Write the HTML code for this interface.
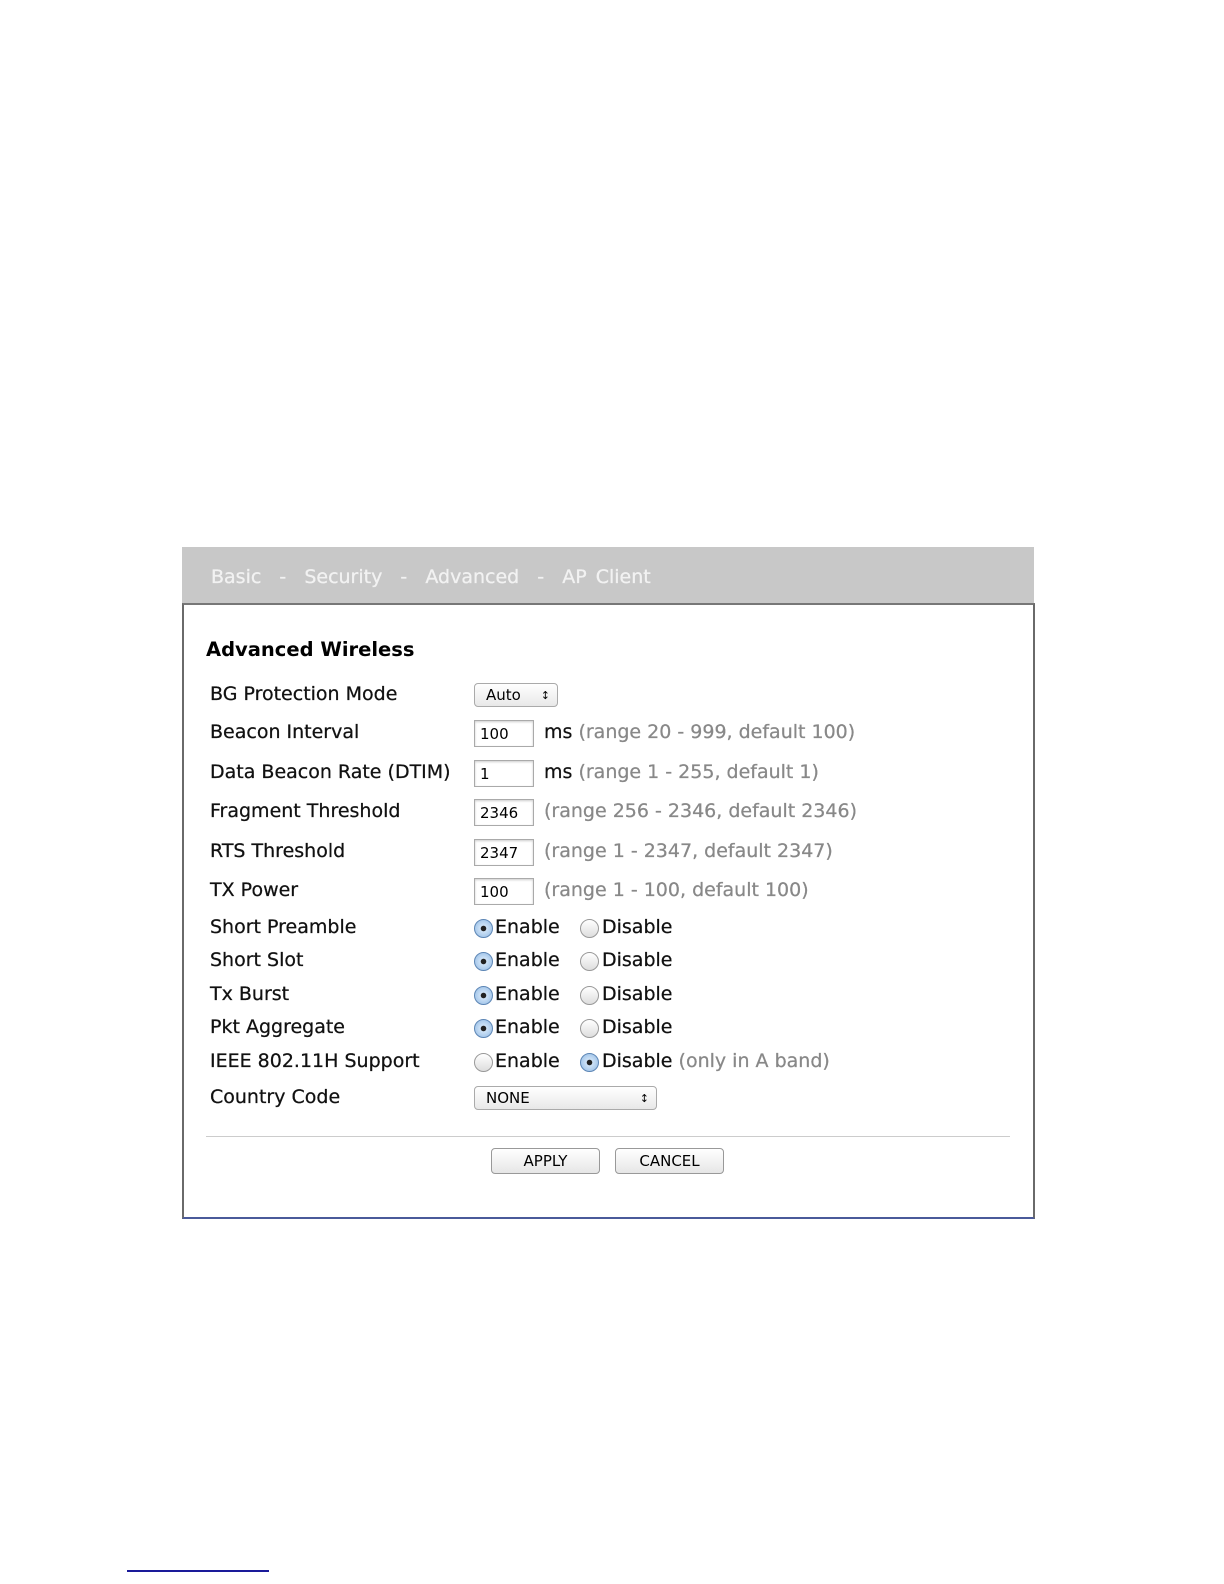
<!DOCTYPE html>
<html><head><meta charset="utf-8"><style>
body{margin:0;width:1224px;height:1584px;background:#fff;position:relative;font-family:"DejaVu Sans","Liberation Sans",sans-serif;overflow:hidden}
.a{position:absolute;white-space:nowrap}
.hdr{left:182px;top:547px;width:852px;height:57px;background:#c8c8c8}
.nav{left:211px;top:566px;color:#f2f2f2;font-size:19px;-webkit-text-stroke:0.3px #f2f2f2;word-spacing:3px}
.box{left:182px;top:603px;width:849px;height:612px;border:2px solid #6a6a6a;border-bottom-color:#4a5a9a;border-top-color:#777}
.t{font-size:19px;color:#111;-webkit-text-stroke:0.25px #111}
.g{color:#888;-webkit-text-stroke:0.25px #888}
.inp{position:absolute;width:60px;height:27px;border:1px solid #aaa;box-shadow:inset 0 1px 2px #ccc;font-size:15px;line-height:27px;padding-left:5px;box-sizing:border-box;background:#fff}
.sel{position:absolute;height:24px;border:1px solid #aaa;border-radius:4px;background:linear-gradient(#fff,#e8e8e8);font-size:15px;line-height:23px;padding-left:11px;box-sizing:border-box}
.sel:after{content:"\2195";position:absolute;right:7px;top:0;font-size:11px}
.r{position:absolute;width:19px;height:19px;border-radius:50%;border:1px solid #999;background:linear-gradient(#fff,#ddd);box-sizing:border-box}
.r.on{background:radial-gradient(circle,#222 0 2.5px,#cfe3f7 3px,#8fb8e3);border-color:#5d86b5}
.btn{position:absolute;top:1148px;height:26px;width:109px;border:1px solid #999;border-radius:4px;background:linear-gradient(#fff,#e6e6e6);font-size:15px;text-align:center;line-height:25px;box-sizing:border-box}
</style></head><body>
<div class="a hdr"></div>
<div class="a nav">Basic &nbsp;-&nbsp; Security &nbsp;-&nbsp; Advanced &nbsp;-&nbsp; AP Client</div>
<div class="a box"></div>
<div class="a" style="left:206px;top:638px;font-size:19.5px;font-weight:bold">Advanced Wireless</div>

<div class="a t" style="left:210px;top:683px">BG Protection Mode</div>
<div class="sel" style="left:474px;top:683px;width:84px">Auto</div>

<div class="a t" style="left:210px;top:721px">Beacon Interval</div>
<div class="inp" style="left:474px;top:720px">100</div>
<div class="a t" style="left:544px;top:721px">ms <span class="g">(range 20 - 999, default 100)</span></div>

<div class="a t" style="left:210px;top:761px">Data Beacon Rate (DTIM)</div>
<div class="inp" style="left:474px;top:760px">1</div>
<div class="a t" style="left:544px;top:761px">ms <span class="g">(range 1 - 255, default 1)</span></div>

<div class="a t" style="left:210px;top:800px">Fragment Threshold</div>
<div class="inp" style="left:474px;top:799px">2346</div>
<div class="a t g" style="left:544px;top:800px">(range 256 - 2346, default 2346)</div>

<div class="a t" style="left:210px;top:840px">RTS Threshold</div>
<div class="inp" style="left:474px;top:839px">2347</div>
<div class="a t g" style="left:544px;top:840px">(range 1 - 2347, default 2347)</div>

<div class="a t" style="left:210px;top:879px">TX Power</div>
<div class="inp" style="left:474px;top:878px">100</div>
<div class="a t g" style="left:544px;top:879px">(range 1 - 100, default 100)</div>

<div class="a t" style="left:210px;top:916px">Short Preamble</div>
<div class="r on" style="left:474px;top:919px"></div><div class="a t" style="left:495px;top:916px">Enable</div>
<div class="r" style="left:580px;top:919px"></div><div class="a t" style="left:602px;top:916px">Disable</div>

<div class="a t" style="left:210px;top:949px">Short Slot</div>
<div class="r on" style="left:474px;top:952px"></div><div class="a t" style="left:495px;top:949px">Enable</div>
<div class="r" style="left:580px;top:952px"></div><div class="a t" style="left:602px;top:949px">Disable</div>

<div class="a t" style="left:210px;top:983px">Tx Burst</div>
<div class="r on" style="left:474px;top:986px"></div><div class="a t" style="left:495px;top:983px">Enable</div>
<div class="r" style="left:580px;top:986px"></div><div class="a t" style="left:602px;top:983px">Disable</div>

<div class="a t" style="left:210px;top:1016px">Pkt Aggregate</div>
<div class="r on" style="left:474px;top:1019px"></div><div class="a t" style="left:495px;top:1016px">Enable</div>
<div class="r" style="left:580px;top:1019px"></div><div class="a t" style="left:602px;top:1016px">Disable</div>

<div class="a t" style="left:210px;top:1050px">IEEE 802.11H Support</div>
<div class="r" style="left:474px;top:1053px"></div><div class="a t" style="left:495px;top:1050px">Enable</div>
<div class="r on" style="left:580px;top:1053px"></div><div class="a t" style="left:602px;top:1050px">Disable <span class="g">(only in A band)</span></div>

<div class="a t" style="left:210px;top:1086px">Country Code</div>
<div class="sel" style="left:474px;top:1086px;width:183px">NONE</div>

<div class="a" style="left:206px;top:1136px;width:804px;height:1px;background:#ccc"></div>
<div class="btn" style="left:491px">APPLY</div>
<div class="btn" style="left:615px">CANCEL</div>

<div class="a" style="left:127px;top:1570px;width:142px;height:2px;background:#1a1a99"></div>
</body></html>
